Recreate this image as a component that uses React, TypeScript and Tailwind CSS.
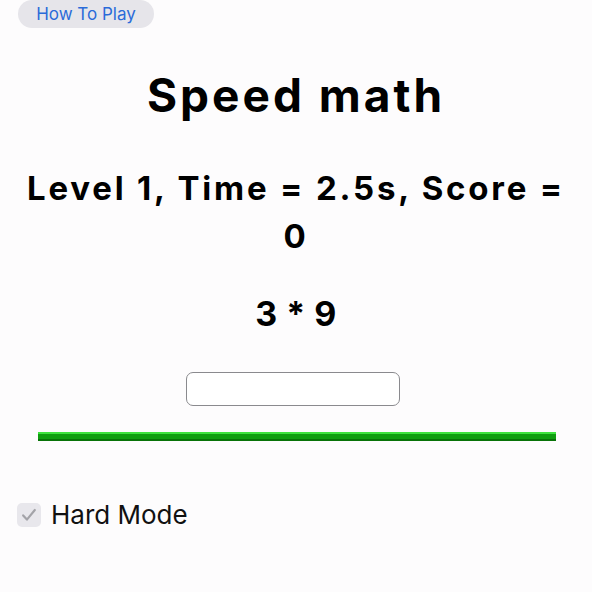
export default function App() {
  return (
    <div className="w-[592px] h-[592px] bg-[#fdfcfd] text-black overflow-hidden" style={{ fontFamily: "Inter, 'Noto Sans', sans-serif" }}>
      <div className="pl-[18px]">
        <button className="h-[28px] w-[136px] rounded-full bg-[#e6e5ea] text-[#2b6bd9] text-[17px] leading-[28px]">
          How To Play
        </button>
      </div>

      <h1 className="mt-[41px] text-center text-[46px] font-bold leading-[52px] tracking-[3px]">Speed math</h1>

      <div className="mt-[43px] px-[24px] text-center text-[33px] font-bold leading-[48px] tracking-[2.8px]">
        Level 1, Time = 2.5s, Score = 0
      </div>

      <div className="mt-[34px] text-center text-[34px] font-bold leading-[40px] tracking-[0.5px]">3 * 9</div>

      <div className="mt-[38px] pl-[186px]">
        <input className="block w-[214px] h-[34px] rounded-[7px] border border-[#8a8a8e] bg-white outline-none" />
      </div>

      <div className="mt-[26px] ml-[38px] mr-[36px] h-[9px] bg-[#0f9d0f] border-t-2 border-[#3ee23e] border-b-2 border-b-[#087308]" />

      <label className="mt-[60px] ml-[17px] flex items-center gap-[10px]">
        <span className="w-[24px] h-[24px] rounded-[5px] bg-[#e8e7ec] flex items-center justify-center">
          <svg viewBox="0 0 24 24" className="w-[20px] h-[20px]" fill="none" stroke="#a3a3a8" strokeWidth={2.6} strokeLinecap="round" strokeLinejoin="round">
            <path d="M5 12.5l4.5 5L19 6" />
          </svg>
        </span>
        <span className="text-[26px] leading-[28px] text-[#111]">Hard Mode</span>
      </label>
    </div>
  );
}
